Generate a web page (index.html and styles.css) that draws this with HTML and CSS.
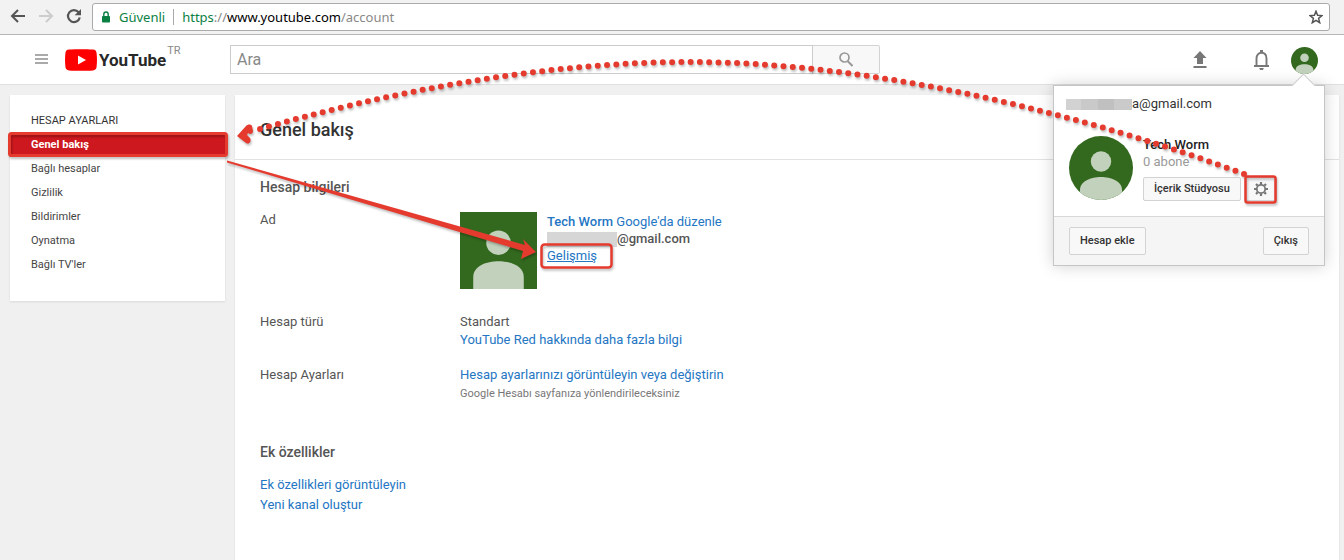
FILE: index.html
```html
<!DOCTYPE html>
<html lang="tr">
<head>
<meta charset="utf-8">
<title>YouTube</title>
<link rel="stylesheet" href="styles.css">
</head>
<body>
<svg class="defs" aria-hidden="true">
  <symbol id="person" viewBox="0 0 64 64">
    <rect width="64" height="64" fill="#33691e"/>
    <circle cx="32" cy="25.500" r="10.200" fill="#c2d1bc"/>
    <path d="M11 64V54C11 45 22 41 32 41s21 4 21 13v10z" fill="#c2d1bc"/>
  </symbol>
</svg>

<div class="browser">
  <button class="nav" aria-label="Geri"><svg width="16" height="16" viewBox="0 0 16 16" fill="none" stroke="#555" stroke-width="2"><path d="M15 8H2.500M8 2 2 8l6 6"/></svg></button>
  <button class="nav" aria-label="İleri"><svg width="16" height="16" viewBox="0 0 16 16" fill="none" stroke="#ccc" stroke-width="2"><path d="M1 8h12.500M8 2l6 6-6 6"/></svg></button>
  <button class="nav" aria-label="Yenile"><svg width="16" height="16" viewBox="0 0 16 16"><path d="M12.600 4.200A6 6 0 1 0 13.800 9.500" fill="none" stroke="#555" stroke-width="2.200"/><path d="M15 1v6.300H8.700z" fill="#555"/></svg></button>
  <div class="address">
    <svg class="lock" width="10" height="12" viewBox="0 0 10 12"><rect x="1" y="5" width="8" height="6.500" rx=".8" fill="#0b8043"/><path d="M2.800 5.500V3.200a2.200 2.200 0 0 1 4.400 0v2.300" fill="none" stroke="#0b8043" stroke-width="1.400"/></svg>
    <span class="secure">Güvenli</span>
    <span class="url"><span class="green">https</span>://<span class="host">www.youtube.com</span>/account</span>
    <button class="star" aria-label="Yer işareti"><svg width="14" height="14" viewBox="0 0 14 14"><path d="M7 1.200 8.600 5.300l4.400.3-3.400 2.800 1.100 4.300L7 10.300l-3.700 2.400 1.100-4.300L1 5.600l4.400-.3z" fill="none" stroke="#555" stroke-width="1.500"/></svg></button>
  </div>
</div>

<header class="masthead">
  <button class="menu" aria-label="Menü"><svg width="13" height="11" viewBox="0 0 13 11" fill="#aaa"><path d="M0 0h13v2H0zM0 4h13v2H0zM0 8h13v2H0z"/></svg></button>
  <a class="logo" href="#">
    <svg width="32" height="22" viewBox="0 0 32 22"><path d="M4 .6C11 0 21 0 28 .6c2.300.2 3.400 1.500 3.600 3.700.5 4.500.5 9 0 13.400-.2 2.200-1.300 3.500-3.600 3.700-7 .6-17 .6-24 0C1.700 21.200.6 19.900.4 17.700c-.5-4.500-.5-9 0-13.400C.6 2.100 1.700.8 4 .6z" fill="red"/><path d="M13 6.500v9l8-4.500z" fill="#fff"/></svg>
    <span class="wordmark">YouTube</span><span class="region">TR</span>
  </a>
  <form class="search">
    <input type="text" placeholder="Ara" aria-label="Ara">
    <button type="button" aria-label="Ara"><svg width="14" height="15" viewBox="0 0 14 15" fill="none" stroke="#999"><circle cx="5.500" cy="5.500" r="4.500" stroke-width="1.700"/><path d="m8.500 9 5 5" stroke-width="2"/></svg></button>
  </form>
  <div class="actions">
    <button aria-label="Yükle"><svg width="16" height="18" viewBox="0 0 16 18" fill="#777"><path d="M8 0 1.500 7H5v6h6V7h3.500zM1.500 15h13v2h-13z"/></svg></button>
    <button aria-label="Bildirimler"><svg width="17" height="20" viewBox="0 0 17 20"><path d="M3.500 15.500V8.500C3.500 5 5.500 2.800 8.500 2.800s5 2.200 5 5.700v7M1 16h15" fill="none" stroke="#777" stroke-width="1.900"/><path d="M7 0h3v3H7zM6.300 18h4.400a2.200 2.200 0 0 1-4.400 0z" fill="#777"/></svg></button>
    <div class="account">
      <button class="me" aria-label="Hesap"><svg width="27" height="27"><use href="#person"/></svg></button>
      <section class="popover">
        <div class="email"><span class="hidden-name"></span>a@gmail.com</div>
        <div class="profile">
          <svg class="portrait" width="64" height="64"><use href="#person"/></svg>
          <div>
            <div class="channel">Tech Worm</div>
            <div class="subs">0 abone</div>
            <div class="tools">
              <button class="btn small">İçerik Stüdyosu</button>
              <button class="btn gear" aria-label="Ayarlar"><svg width="14" height="14" viewBox="0 0 14 14" fill="none" stroke="#777"><circle cx="7" cy="7" r="4.200" stroke-width="1.800"/><path d="M7 0v2.500M7 11.500V14M0 7h2.500M11.500 7H14M2 2l1.600 1.600M10.400 10.400 12 12M2 12l1.600-1.600M10.400 3.600 12 2" stroke-width="2.200"/></svg></button>
            </div>
          </div>
        </div>
        <div class="foot"><button class="btn">Hesap ekle</button><button class="btn">Çıkış</button></div>
      </section>
    </div>
  </div>
</header>

<div class="page">
  <nav class="sidebar">
    <h3>HESAP AYARLARI</h3>
    <a class="active" href="#">Genel bakış</a>
    <a href="#">Bağlı hesaplar</a>
    <a href="#">Gizlilik</a>
    <a href="#">Bildirimler</a>
    <a href="#">Oynatma</a>
    <a href="#">Bağlı TV'ler</a>
  </nav>
  <main class="content">
    <h1>Genel bakış</h1>
    <div class="body">
      <h2>Hesap bilgileri</h2>
      <div class="row first">
        <div>Ad</div>
        <div class="identity">
          <svg width="77" height="77"><use href="#person"/></svg>
          <div class="lines">
            <div><a class="strong" href="#">Tech Worm</a> <a href="#">Google'da düzenle</a></div>
            <div class="strong"><span class="hidden-name wide"></span>@gmail.com</div>
            <div><a class="under" href="#">Gelişmiş</a></div>
          </div>
        </div>
      </div>
      <div class="row type">
        <div>Hesap türü</div>
        <div>Standart<br><a href="#">YouTube Red hakkında daha fazla bilgi</a></div>
      </div>
      <div class="row">
        <div>Hesap Ayarları</div>
        <div><a href="#">Hesap ayarlarınızı görüntüleyin veya değiştirin</a><div class="note">Google Hesabı sayfanıza yönlendirileceksiniz</div></div>
      </div>
      <h2 class="extra">Ek özellikler</h2>
      <div class="links"><a href="#">Ek özellikleri görüntüleyin</a><a href="#">Yeni kanal oluştur</a></div>
    </div>
  </main>
</div>

<svg class="marks" width="1344" height="300" viewBox="0 0 1344 300" aria-hidden="true">
  <g fill="none" stroke="#e53b2f">
    <rect x="9.500" y="133.500" width="217" height="22" rx="2" stroke-width="3"/>
    <rect x="541.500" y="244.500" width="70" height="23" rx="3" stroke-width="2.500"/>
    <rect x="1245.500" y="176.500" width="30" height="26" rx="2" stroke-width="2.500"/>
    <path d="M1244 174C1094 118 880 62 690 62 540 62 380 94 257 130" stroke-width="6" stroke-linecap="round" stroke-dasharray="0 9.300"/>
  </g>
  <path d="M237 136 246 126c2-2 5-2 6 0l1 5c0 3-3 4-5 2l-1 2 3 3c2 3-1 7-4 5z" fill="#e53b2f"/>
  <path d="M227 160.500 525 245 523 239 536 252 521 259 523 251 227 162.500z" fill="#e53b2f"/>
</svg>
</body>
</html>
```

FILE: styles.css
```css
* { box-sizing: border-box; }
body { margin: 0; min-height: 100vh; display: flex; flex-direction: column; position: relative; background: #f0f0f0; font: 13px/18px Roboto, sans-serif; color: #555; overflow: hidden; }
button { font: inherit; color: inherit; padding: 0; border: 0; background: none; }
a { color: #2476c3; text-decoration: none; }
svg { display: block; flex: none; }
h1, h2, h3 { margin: 0; font-weight: 500; }
.defs { position: absolute; width: 0; height: 0; }
.marks { position: absolute; top: 0; left: 0; z-index: 5; pointer-events: none; filter: drop-shadow(1px 2px 1px rgba(0, 0, 0, .25)); }

.browser { display: flex; align-items: center; gap: 12px; height: 35px; padding: 0 14px 3px 10px; background: #f2f2f2; border-bottom: 1px solid #b6b6b6; }
.address { flex: 1; display: flex; align-items: center; height: 28px; margin: 2px 0 0 -2px; padding: 0 6px 0 8px; border: 1px solid #aaa; border-radius: 3px; background: #fff; font: 13px/18px "Noto Sans", sans-serif; color: #888; }
.secure { margin-left: 8px; padding-right: 8px; border-right: 1px solid #aaa; color: #0b8043; line-height: 16px; }
.url { margin-left: 8px; }
.green { color: #0b8043; }
.host { color: #000; }
.star { margin-left: auto; }

.masthead { display: flex; align-items: center; height: 50px; padding: 0 26px 0 35px; background: #fff; border-bottom: 1px solid #e0e0e0; }
.logo { display: flex; flex: none; align-items: center; width: 165px; margin-left: 17px; color: #282828; }
.wordmark { margin-left: 2px; font: bold 17px/24px Roboto, sans-serif; }
.region { margin: 0 0 17px 1px; font-size: 11px; line-height: 12px; color: #888; }
.search { display: flex; width: 650px; height: 29px; margin-right: 16px; }
.search input { flex: 1; min-width: 0; padding: 0 6px; border: 1px solid #ccc; background: #fff; font: 16px Roboto, sans-serif; }
.search input::placeholder { color: #888; }
.search button { display: grid; place-items: center; width: 67px; border: 1px solid #d3d3d3; border-left: 0; border-radius: 0 2px 2px 0; background: #f8f8f8; }
.actions { display: flex; align-items: center; gap: 45px; margin-left: auto; }
.account { display: flex; position: relative; margin: 2px 0 0 -24px; }
.me svg, .portrait { border-radius: 50%; }

.popover { position: absolute; z-index: 2; top: 38px; right: -7px; width: 272px; border: 1px solid #c5c5c5; background: #fff; box-shadow: 0 0 15px rgba(0, 0, 0, .18); color: #333; }
.popover::before { content: ""; position: absolute; top: -9px; right: 12px; width: 16px; height: 16px; background: #fff; border: solid #ccc; border-width: 1px 0 0 1px; transform: rotate(45deg); }
.email { padding: 9px 12px 0; }
.hidden-name { display: inline-block; width: 66px; height: 11px; vertical-align: -2px; background: linear-gradient(90deg, #d2d2d2 22%, #c9c9c9 22% 48%, #c0c0c0 48% 72%, #cacaca 72%); }
.hidden-name.wide { width: 70px; height: 15px; vertical-align: -4px; background: #d6d6d6; }
.profile { display: flex; gap: 10px; padding: 23px 15px 15px; }
.channel { font-weight: 500; color: #222; line-height: 17px; }
.subs { color: #999; line-height: 17px; }
.tools { display: flex; gap: 4px; margin-top: 7px; }
.btn { height: 28px; padding: 0 10px; border: 1px solid #d3d3d3; border-radius: 2px; background: #f8f8f8; font-size: 11px; font-weight: 500; color: #333; }
.btn.small { height: 24px; }
.btn.gear { display: grid; place-items: center; width: 32px; height: 24px; padding: 0; }
.foot { display: flex; justify-content: space-between; padding: 10px 15px; border-top: 1px solid #d8d8d8; background: #f5f5f5; }

.page { flex: 1; display: flex; align-items: flex-start; gap: 10px; padding: 10px 5px 0 10px; }
.sidebar { width: 215px; padding: 14px 0 24px; background: #fff; box-shadow: 0 1px 2px rgba(0, 0, 0, .1); font-size: 11px; line-height: 24px; }
.sidebar h3 { padding-left: 21px; font-size: 11px; font-weight: 400; line-height: 24px; color: #333; }
.sidebar a { display: block; padding-left: 21px; color: #444; }
.sidebar .active { background: #cc181e; color: #fff; font-weight: 700; }
.content { flex: 1; align-self: stretch; background: #fff; box-shadow: 0 1px 2px rgba(0, 0, 0, .1); }
h1 { padding: 23px 25px; font-size: 18px; line-height: 24px; height: 65px; color: #333; border-bottom: 1px solid #e2e2e2; }
h2 { font-size: 14px; line-height: 18px; color: #555; }
.body { padding: 18px 25px; }
.row { display: grid; grid-template-columns: 200px 1fr; margin-top: 17px; }
.row.first { margin-top: 15px; }
.row.type { margin-top: 24px; }
.identity { display: flex; gap: 10px; padding-top: 1px; line-height: 17px; }
.lines { padding-top: 1px; }
.strong { font-weight: 500; }
.under { text-decoration: underline; }
.note { padding-top: 1px; font-size: 11px; color: #777; }
.extra { margin-top: 40px; }
.links { display: flex; flex-direction: column; align-items: flex-start; margin-top: 14px; line-height: 20px; }
```
